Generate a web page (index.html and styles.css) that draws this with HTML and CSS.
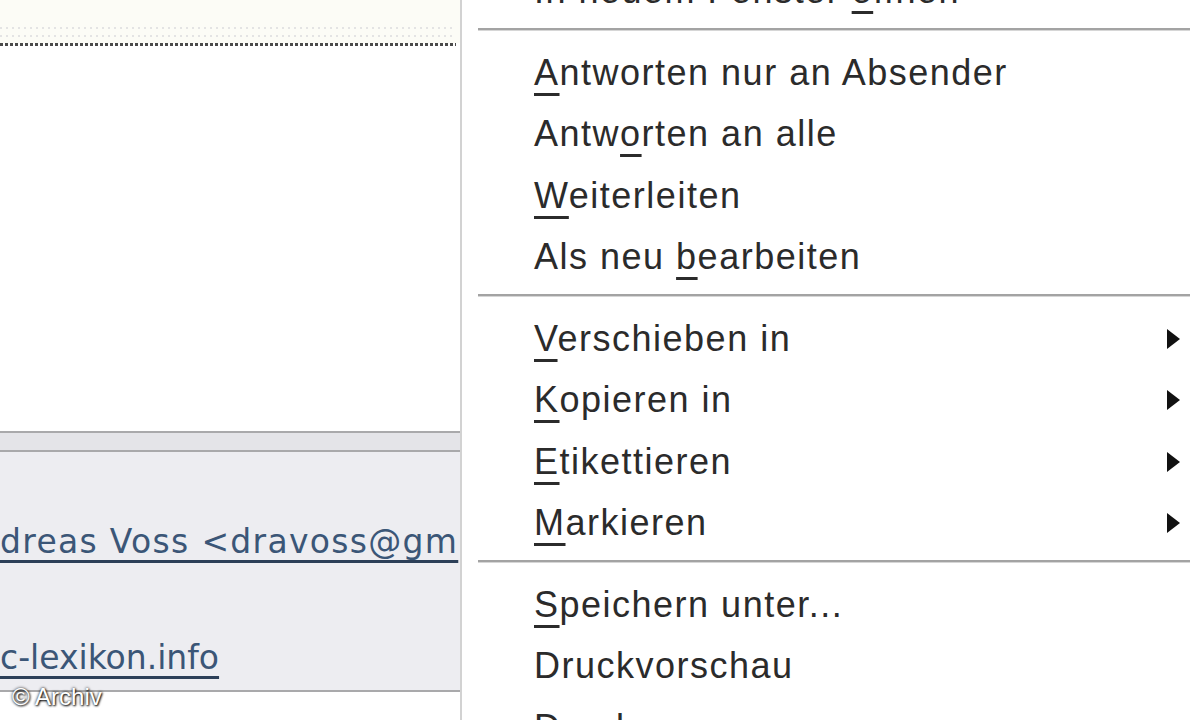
FILE: index.html
```html
<!DOCTYPE html>
<html lang="de">
<head>
<meta charset="utf-8">
<title>Kontextmenü</title>
<link rel="stylesheet" href="styles.css">
</head>
<body>
<div class="screen">
  <div class="pane">
    <div class="pane-top">
      <div class="faint-dots"></div>
      <div class="faint-dots"></div>
    </div>
    <div class="dots"></div>
    <div class="pane-main"></div>
    <div class="hdr-band"></div>
    <div class="hdr-body">
      <a class="link link-from">dreas Voss &lt;dravoss@gm</a>
      <a class="link link-to">c-lexikon.info</a>
    </div>
    <div class="pane-bottom"></div>
  </div>
  <div class="menu">
    <ul class="menu-list">
      <li class="item"><span>In neuem Fenster <u>ö</u>ffnen</span></li>
      <li class="sep"></li>
      <li class="item"><span><u>A</u>ntworten nur an Absender</span></li>
      <li class="item"><span>Antw<u>o</u>rten an alle</span></li>
      <li class="item"><span><u>W</u>eiterleiten</span></li>
      <li class="item"><span>Als neu <u>b</u>earbeiten</span></li>
      <li class="sep"></li>
      <li class="item sub"><span><u>V</u>erschieben in</span><i class="arrow"></i></li>
      <li class="item sub"><span><u>K</u>opieren in</span><i class="arrow"></i></li>
      <li class="item sub"><span><u>E</u>tikettieren</span><i class="arrow"></i></li>
      <li class="item sub"><span><u>M</u>arkieren</span><i class="arrow"></i></li>
      <li class="sep"></li>
      <li class="item"><span><u>S</u>peichern unter...</span></li>
      <li class="item"><span>Druckvorschau</span></li>
      <li class="item"><span>Drucken</span></li>
    </ul>
  </div>
  <div class="watermark">© Archiv</div>
</div>
</body>
</html>
```

FILE: styles.css
```css
html, body {
  margin: 0;
  padding: 0;
  background: #ffffff;
}
.screen {
  position: relative;
  width: 1200px;
  height: 720px;
  overflow: hidden;
  display: flex;
  background: #ffffff;
}
.pane {
  width: 460px;
  flex: none;
  display: flex;
  flex-direction: column;
  overflow: hidden;
}
.pane-top {
  height: 43px;
  background: #fcfcf6;
  display: flex;
  flex-direction: column;
  justify-content: flex-end;
  gap: 6px;
  padding-bottom: 6px;
  box-sizing: border-box;
}
.faint-dots {
  height: 2px;
  margin-right: 4px;
  background: repeating-linear-gradient(to right, #e4e4e4 0 2px, transparent 2px 6px);
}
.dots {
  height: 3px;
  margin-right: 4px;
  background: repeating-linear-gradient(to right, #4a4a4a 0 3px, transparent 3px 5px);
}
.pane-main {
  flex: 1;
  background: #ffffff;
}
.hdr-band {
  height: 17px;
  flex: none;
  background: #e4e4e8;
  border-top: 2px solid #a9a9ab;
  border-bottom: 2px solid #a9a9ab;
}
.hdr-body {
  height: 238px;
  flex: none;
  background: #ededf1;
  border-bottom: 2px solid #a9a9ab;
  display: flex;
  flex-direction: column;
  white-space: nowrap;
}
.pane-bottom {
  height: 28px;
  flex: none;
  background: #ffffff;
}
.link {
  display: block;
  font-family: "DejaVu Sans", Verdana, sans-serif;
  font-size: 33px;
  line-height: 38px;
  color: #3b5677;
  text-decoration: underline;
  text-decoration-color: #2c3f58;
  text-decoration-thickness: 3px;
  text-underline-offset: 7px;
}
.link-from {
  margin-top: 71px;
  letter-spacing: 1.3px;
}
.link-to {
  margin-top: 78px;
}
.menu {
  flex: 1;
  border-left: 2px solid #d2d2d2;
  background: #ffffff;
  overflow: hidden;
}
.menu-list {
  list-style: none;
  margin: -41px 0 0 0;
  padding: 0;
}
.item {
  height: 61.5px;
  display: flex;
  align-items: center;
  padding: 3px 20px 0 72px;
  box-sizing: border-box;
  font-family: "Liberation Sans", Arial, sans-serif;
  font-size: 36px;
  letter-spacing: 1.5px;
  color: #2b2b2b;
  white-space: nowrap;
}
.sub {
  justify-content: space-between;
}
.item u {
  text-decoration-thickness: 3px;
  text-underline-offset: 8px;
}
.sep {
  height: 20px;
  box-sizing: border-box;
  padding-top: 7px;
  margin: 0 10px 0 16px;
}
.sep::before {
  content: "";
  display: block;
  height: 2px;
  background: #a3a3a3;
  border-bottom: 1px solid #d6d6d6;
}
.arrow {
  width: 0;
  height: 0;
  border-top: 10px solid transparent;
  border-bottom: 10px solid transparent;
  border-left: 13px solid #111111;
}
.watermark {
  position: absolute;
  left: 12px;
  top: 683px;
  font-family: "Liberation Sans", Arial, sans-serif;
  font-size: 24px;
  color: #ffffff;
  text-shadow: 0 0 3px #000000, 1px 1px 2px #222222;
}
```
